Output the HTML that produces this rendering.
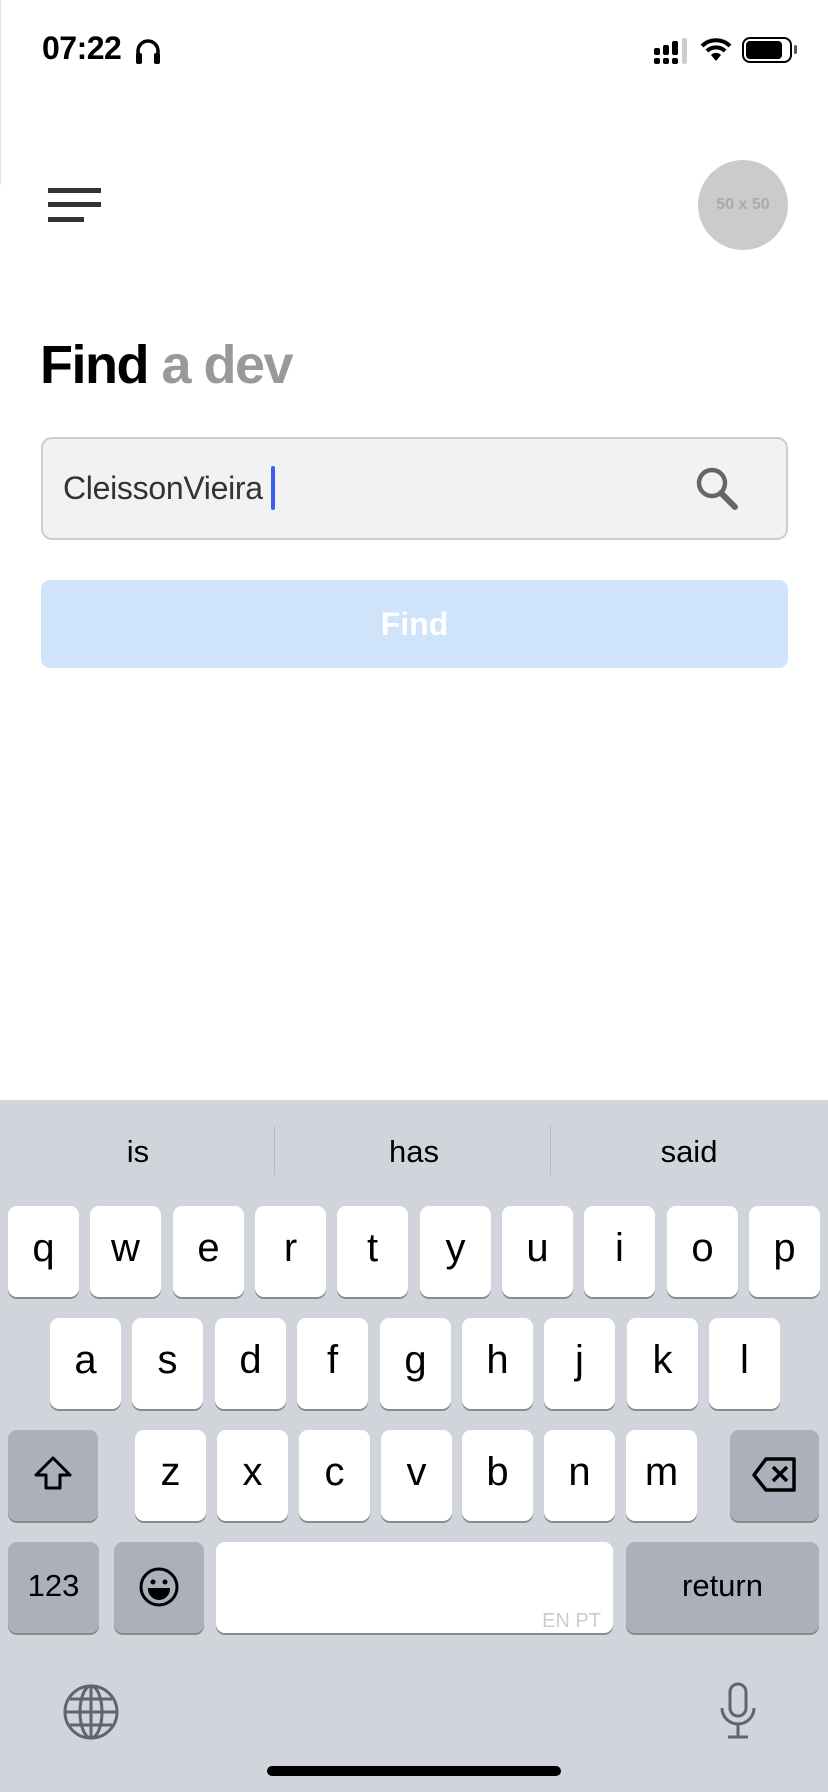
<!DOCTYPE html>
<html><head><meta charset="utf-8"><style>
*{margin:0;padding:0;box-sizing:border-box}
body{width:828px;height:1792px;background:#fff;position:relative;overflow:hidden;font-family:"Liberation Sans",sans-serif}
.a{position:absolute}
.kb{position:absolute;left:0;top:1100px;width:828px;height:692px;background:#d1d4db}
.k{position:absolute;width:71px;height:91px;background:#fff;border-radius:9px;box-shadow:0 2px 0 #898a8d;font-size:40px;color:#000;text-align:center;line-height:84px}
.g{background:#abb0ba}
.sg{position:absolute;top:1134px;font-size:31px;color:#000;text-align:center;width:276px}
</style></head><body>
<div class="a" style="left:0;top:0;width:1px;height:185px;background:#e4e4e4"></div>
<div class="a" style="left:42px;top:30px;font-size:32px;font-weight:bold;letter-spacing:-0.5px">07:22</div>
<svg class="a" style="left:134px;top:36px" width="28" height="30" viewBox="0 0 28 30"><path d="M4 26V15a10 10 0 0 1 20 0v11" fill="none" stroke="#000" stroke-width="3.5"/><rect x="2" y="17" width="6" height="11" rx="2"/><rect x="20" y="17" width="6" height="11" rx="2"/></svg>
<svg class="a" style="left:654px;top:38px" width="36" height="28" viewBox="0 0 36 28"><g fill="#000"><rect x="0" y="10" width="6" height="7" rx="2"/><rect x="9" y="7" width="6" height="10" rx="2"/><rect x="18" y="3" width="6" height="14" rx="2"/><rect x="0" y="20" width="6" height="6" rx="2"/><rect x="9" y="20" width="6" height="6" rx="2"/><rect x="18" y="20" width="6" height="6" rx="2"/></g><rect x="28" y="0" width="5" height="26" rx="2" fill="#ccc"/></svg>
<svg class="a" style="left:700px;top:37px" width="32" height="26" viewBox="0 0 32 26"><path d="M2 9a20 20 0 0 1 28 0" fill="none" stroke="#000" stroke-width="4"/><path d="M7 14a13 13 0 0 1 18 0" fill="none" stroke="#000" stroke-width="4"/><path d="M11 18l5 6 5-6a7 7 0 0 0-10 0z"/></svg>
<div class="a" style="left:742px;top:37px;width:50px;height:26px;border:2.5px solid #000;border-radius:8px"></div>
<div class="a" style="left:746px;top:41px;width:36px;height:18px;background:#000;border-radius:4px"></div>
<div class="a" style="left:794px;top:45px;width:3px;height:9px;background:#555;border-radius:2px"></div>
<div class="a" style="left:48px;top:188px;width:53px;height:5px;background:#333"></div>
<div class="a" style="left:48px;top:202px;width:53px;height:5px;background:#333"></div>
<div class="a" style="left:48px;top:217px;width:36px;height:5px;background:#333"></div>
<div class="a" style="left:698px;top:160px;width:90px;height:90px;border-radius:50%;background:#cbcbcb;color:#aaa;font-size:16px;font-weight:bold;text-align:center;line-height:90px">50 x 50</div>
<div class="a" style="left:40px;top:334px;font-size:54px;font-weight:bold;color:#000;letter-spacing:-1.5px">Find <span style="color:#999">a dev</span></div>
<div class="a" style="left:41px;top:437px;width:747px;height:103px;background:#f2f2f2;border:2px solid #ccc;border-radius:11px"></div>
<div class="a" style="left:63px;top:470px;font-size:32px;color:#333;letter-spacing:-0.3px">CleissonVieira</div>
<div class="a" style="left:271px;top:466px;width:4px;height:44px;background:#3a5ef0;border-radius:2px"></div>
<svg class="a" style="left:695px;top:466px" width="46" height="44" viewBox="0 0 46 44"><circle cx="17" cy="17" r="13" fill="none" stroke="#666" stroke-width="4.5"/><path d="M26 27l14 14" stroke="#666" stroke-width="6" stroke-linecap="round"/></svg>
<div class="a" style="left:41px;top:580px;width:747px;height:88px;background:#cfe3fb;border-radius:9px;color:#fff;font-size:32px;font-weight:bold;text-align:center;line-height:88px">Find</div>
<div class="kb"></div>
<div class="sg" style="left:0">is</div>
<div class="sg" style="left:276px">has</div>
<div class="sg" style="left:551px">said</div>
<div class="a" style="left:274px;top:1126px;width:1px;height:49px;background:#b6b9c0"></div>
<div class="a" style="left:550px;top:1126px;width:1px;height:49px;background:#b6b9c0"></div>
<div class="k" style="left:8px;top:1206px">q</div><div class="k" style="left:90px;top:1206px">w</div><div class="k" style="left:173px;top:1206px">e</div><div class="k" style="left:255px;top:1206px">r</div><div class="k" style="left:337px;top:1206px">t</div><div class="k" style="left:420px;top:1206px">y</div><div class="k" style="left:502px;top:1206px">u</div><div class="k" style="left:584px;top:1206px">i</div><div class="k" style="left:667px;top:1206px">o</div><div class="k" style="left:749px;top:1206px">p</div>
<div class="k" style="left:50px;top:1318px">a</div><div class="k" style="left:132px;top:1318px">s</div><div class="k" style="left:215px;top:1318px">d</div><div class="k" style="left:297px;top:1318px">f</div><div class="k" style="left:380px;top:1318px">g</div><div class="k" style="left:462px;top:1318px">h</div><div class="k" style="left:544px;top:1318px">j</div><div class="k" style="left:627px;top:1318px">k</div><div class="k" style="left:709px;top:1318px">l</div>
<div class="k g" style="left:8px;top:1430px;width:90px"><svg width="44" height="40" viewBox="0 0 44 40" style="margin-top:24px"><path d="M22 4L5 21h10v13h14V21h10z" fill="none" stroke="#000" stroke-width="3" stroke-linejoin="round"/></svg></div>
<div class="k" style="left:135px;top:1430px">z</div><div class="k" style="left:217px;top:1430px">x</div><div class="k" style="left:299px;top:1430px">c</div><div class="k" style="left:381px;top:1430px">v</div><div class="k" style="left:462px;top:1430px">b</div><div class="k" style="left:544px;top:1430px">n</div><div class="k" style="left:626px;top:1430px">m</div>
<div class="k g" style="left:730px;top:1430px;width:89px"><svg width="48" height="40" viewBox="0 0 48 40" style="margin-top:25px"><path d="M15 4h28v31H15L3 20z" fill="none" stroke="#000" stroke-width="3.5" stroke-linejoin="round"/><path d="M22 12l14 14M36 12L22 26" stroke="#000" stroke-width="3.5"/></svg></div>
<div class="k g" style="left:8px;top:1542px;width:91px;font-size:31px;line-height:88px">123</div>
<div class="k g" style="left:114px;top:1542px;width:90px"><svg width="42" height="42" viewBox="0 0 42 42" style="margin-top:24px"><circle cx="21" cy="21" r="18" fill="none" stroke="#000" stroke-width="3"/><circle cx="15" cy="16" r="2.5"/><circle cx="27" cy="16" r="2.5"/><path d="M11 23h20a10 10 0 0 1-20 0z" stroke="#000" stroke-width="2"/></svg></div>
<div class="k" style="left:216px;top:1542px;width:397px"><span style="position:absolute;right:12px;bottom:2px;font-size:20px;color:#ccc;line-height:20px;font-family:'Liberation Sans Narrow','Liberation Sans',sans-serif">EN PT</span></div>
<div class="k g" style="left:626px;top:1542px;width:193px;font-size:31px;line-height:88px">return</div>
<svg class="a" style="left:62px;top:1683px" width="58" height="58" viewBox="0 0 58 58"><g fill="none" stroke="#60646b" stroke-width="3"><circle cx="29" cy="29" r="26"/><ellipse cx="29" cy="29" rx="11" ry="26"/><path d="M29 3v52M3 29h52M8 16h42M8 42h42"/></g></svg>
<svg class="a" style="left:718px;top:1682px" width="40" height="58" viewBox="0 0 40 58"><g fill="none" stroke="#60646b" stroke-width="3"><rect x="12" y="2" width="16" height="32" rx="8"/><path d="M4 26a16 16 0 0 0 32 0M20 42v12M10 55h20"/></g></svg>
<div class="a" style="left:267px;top:1766px;width:294px;height:10px;background:#000;border-radius:5px"></div>
</body></html>
